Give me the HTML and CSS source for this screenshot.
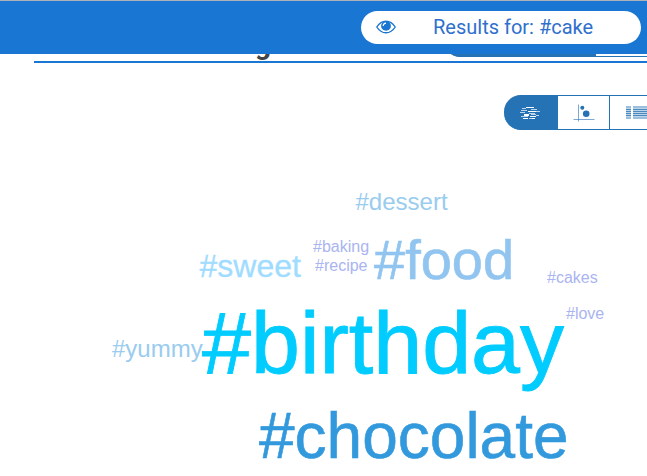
FILE: index.html
```
<!DOCTYPE html>
<html lang="en">
<head>
    <meta charset="UTF-8">
    <meta name="viewport" content="width=device-width, initial-scale=1.0">
    <title>Results</title>
    <link rel="stylesheet" href="styles.css">
</head>
<body>
    <header class="top-bar">
        <div class="result-pill">
            <svg class="eye" width="20" height="14" viewBox="0 0 20 14">
                <path d="M0.8 7C3.2 3.2 6.3 1.2 10 1.2S16.8 3.2 19.2 7C16.8 10.8 13.7 12.8 10 12.8S3.2 10.8 0.8 7Z" fill="none" stroke="#1976d2" stroke-width="1.4"/>
                <circle cx="10" cy="5.9" r="4.9" fill="#1976d2"/>
                <path d="M7.2 6A2.9 2.9 0 0 1 10 3.1" fill="none" stroke="#fff" stroke-width="1.1"/>
            </svg>
            <span class="result-text">Results for: #cake</span>
        </div>
    </header>

    <main>
        <div class="section-head">
            <h2>g</h2>
            <div class="head-tabs">
                <div class="head-tab active"></div>
                <div class="head-tab"></div>
            </div>
        </div>

        <div class="view-buttons">
            <button class="view-button active">
                <svg width="22" height="14" viewBox="0 0 22 14">
                    <g fill="#fff">
                        <path d="M7 1h8v1H7zM9 5h8v1H9zM5 8h5v2H5zM11 10h6v1h-6zM4 12h5v1H4zM13 12h3v1h-3z"/>
                        <path opacity=".7" d="M3 2h4v1H3zM12 3h6v1h-6zM2 4h6v1H2zM17 5h4v1h-4zM1 6h5v1H1zM10 7h6v1h-6zM12 8h5v1h-5zM17 9h3v1h-3zM2 10h7v1H2zM10 12h3v1h-3z"/>
                    </g>
                </svg>
            </button>
            <button class="view-button">
                <svg width="22" height="18" viewBox="0 0 22 18">
                    <path d="M5.500 0.500V17.500M0.500 15.500H21.500" fill="none" stroke="#2572b4" stroke-opacity=".6"/>
                    <circle cx="9.300" cy="3.700" r="2" fill="#2572b4"/>
                    <circle cx="13.200" cy="9.700" r="3.300" fill="#2572b4"/>
                </svg>
            </button>
            <button class="view-button wide">
                <svg width="21" height="13" viewBox="0 0 21 13">
                    <g fill="#2572b4">
                        <path opacity=".45" d="M0 0h5v2H0zM7 0h14v2H7zM0 11h5v2H0zM7 11h14v2H7z"/>
                        <path opacity=".3" d="M0 2h5v9H0zM7 2h14v9H7z"/>
                        <path opacity=".75" d="M0 3h5v1H0zM7 3h14v1H7zM0 5h5v1H0zM7 5h14v1H7zM0 7h5v1H0zM7 7h14v1H7zM0 9h5v1H0zM7 9h14v1H7z"/>
                    </g>
                </svg>
            </button>
        </div>

        <!-- Word cloud -->
        <svg class="cloud" width="647" height="346" viewBox="0 130 647 346">
            <text class="size-24 pale" x="355.500" y="210">#dessert</text>
            <text class="size-16 violet" x="313" y="252">#baking</text>
            <text class="size-16 violet" x="315" y="271">#recipe</text>
            <text class="size-56" x="374" y="279">#food</text>
            <text class="size-32" x="199.500" y="277">#sweet</text>
            <text class="size-16 violet" x="547" y="283">#cakes</text>
            <text class="size-16 violet" x="566" y="319">#love</text>
            <text class="size-24 pale" x="112" y="357">#yummy</text>
            <text class="size-88" x="202" y="373">#birthday</text>
            <text class="size-64" x="259" y="458">#chocolate</text>
        </svg>
    </main>
</body>
</html>
```

FILE: styles.css
```
body {
    font-family: Roboto, Arial, sans-serif;
    margin: 0;
    background: #fff;
    overflow: hidden;
}
.top-bar {
    position: relative;
    z-index: 1;
    display: flex;
    justify-content: flex-end;
    box-sizing: border-box;
    height: 54px;
    padding: 10px 6px 0 0;
    border-top: 1px solid #adb2b8;
    background: #1976d2;
}
.result-pill {
    display: flex;
    align-items: center;
    box-sizing: border-box;
    width: 280px;
    height: 33px;
    padding-left: 15px;
    border-radius: 17px;
    background: #fff;
    color: #2f70cc;
}
.eye {
    margin-top: -2px;
}
.result-text {
    margin: -2px 0 0 37px;
    font-size: 20px;
    white-space: nowrap;
}
/* Scrolled partly behind the top bar */
.section-head {
    display: flex;
    align-items: flex-end;
    justify-content: space-between;
    box-sizing: border-box;
    height: 39px;
    margin: -30px 0 0 34px;
    padding-bottom: 4px;
    border-bottom: 2px solid #1976d2;
}
.section-head h2 {
    margin: 0 0 -5px 221px;
    font-size: 28px;
    line-height: 34px;
    color: #444;
}
.head-tabs {
    display: flex;
    width: 203px;
}
.head-tab {
    box-sizing: border-box;
    flex: 1;
    height: 31px;
    border-bottom: 1px solid #2572b4;
}
.head-tab.active {
    flex: 0 0 152px;
    border-radius: 0 0 0 16px;
    background: #2572b4;
}
.view-buttons {
    display: flex;
    height: 35px;
    margin: 32px 0 0 504px;
}
.view-button {
    display: flex;
    align-items: center;
    justify-content: center;
    box-sizing: border-box;
    width: 52px;
    padding: 0;
    border: solid #2572b4;
    border-width: 1px 1px 1px 0;
    background: #fff;
}
.view-button.active {
    width: 54px;
    padding-right: 1px;
    border-radius: 17px 0 0 17px;
    background: #2572b4;
}
.view-button.wide {
    width: 37px;
    justify-content: flex-start;
    padding-left: 16px;
    border-right: 0;
}
.cloud {
    display: block;
    font-family: "Liberation Sans", Arial, sans-serif;
}
.size-16 {
    font-size: 16px;
}
.size-24 {
    font-size: 24px;
}
.size-32 {
    font-size: 32px;
    fill: #a0dcff;
    stroke: #a0dcff;
    stroke-width: 0.3px;
}
.size-56 {
    font-size: 56px;
    fill: #91c5f0;
    stroke: #91c5f0;
    stroke-width: 0.6px;
}
.size-64 {
    font-size: 64px;
    fill: #3399dd;
    stroke: #3399dd;
    stroke-width: 0.6px;
}
.size-88 {
    font-size: 88px;
    fill: #00ccff;
    stroke: #00ccff;
    stroke-width: 0.9px;
}
.pale {
    fill: #99ccee;
}
.violet {
    fill: #aab4f0;
}
```
